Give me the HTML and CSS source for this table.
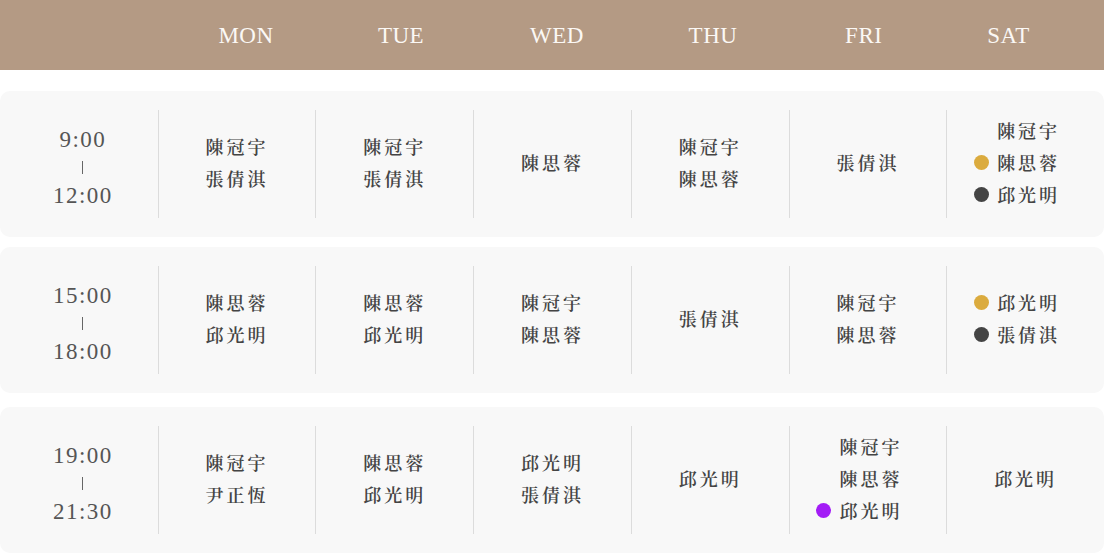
FILE: index.html
```html
<!DOCTYPE html>
<html lang="zh-Hant">
<head>
<meta charset="utf-8">
<title>Schedule</title>
<link rel="stylesheet" href="styles.css">
</head>
<body>
<div class="schedule">
  <div class="head">
    <div class="head-blank"></div>
    <div class="day">MON</div>
    <div class="day">TUE</div>
    <div class="day">WED</div>
    <div class="day">THU</div>
    <div class="day">FRI</div>
    <div class="day">SAT</div>
  </div>

  <div class="rows">
    <div class="row">
      <div class="cell time"><span>9:00</span><i class="dash"></i><span>12:00</span></div>
      <div class="cell"><ul class="names"><li>陳冠宇</li><li>張倩淇</li></ul></div>
      <div class="cell"><ul class="names"><li>陳冠宇</li><li>張倩淇</li></ul></div>
      <div class="cell"><ul class="names"><li>陳思蓉</li></ul></div>
      <div class="cell"><ul class="names"><li>陳冠宇</li><li>陳思蓉</li></ul></div>
      <div class="cell"><ul class="names"><li>張倩淇</li></ul></div>
      <div class="cell"><ul class="names has-dot"><li>陳冠宇</li><li class="dot gold">陳思蓉</li><li class="dot dark">邱光明</li></ul></div>
    </div>

    <div class="row">
      <div class="cell time"><span>15:00</span><i class="dash"></i><span>18:00</span></div>
      <div class="cell"><ul class="names"><li>陳思蓉</li><li>邱光明</li></ul></div>
      <div class="cell"><ul class="names"><li>陳思蓉</li><li>邱光明</li></ul></div>
      <div class="cell"><ul class="names"><li>陳冠宇</li><li>陳思蓉</li></ul></div>
      <div class="cell"><ul class="names"><li>張倩淇</li></ul></div>
      <div class="cell"><ul class="names"><li>陳冠宇</li><li>陳思蓉</li></ul></div>
      <div class="cell"><ul class="names has-dot"><li class="dot gold">邱光明</li><li class="dot dark">張倩淇</li></ul></div>
    </div>

    <div class="row row-last">
      <div class="cell time"><span>19:00</span><i class="dash"></i><span>21:30</span></div>
      <div class="cell"><ul class="names"><li>陳冠宇</li><li>尹正恆</li></ul></div>
      <div class="cell"><ul class="names"><li>陳思蓉</li><li>邱光明</li></ul></div>
      <div class="cell"><ul class="names"><li>邱光明</li><li>張倩淇</li></ul></div>
      <div class="cell"><ul class="names"><li>邱光明</li></ul></div>
      <div class="cell"><ul class="names has-dot"><li>陳冠宇</li><li>陳思蓉</li><li class="dot purple">邱光明</li></ul></div>
      <div class="cell"><ul class="names"><li>邱光明</li></ul></div>
    </div>
  </div>
</div>
</body>
</html>
```

FILE: styles.css
```css
* { box-sizing: border-box; }

html, body {
  margin: 0;
  padding: 0;
  background: #ffffff;
}

body {
  font-family: "Liberation Serif", "Noto Serif CJK TC", "Noto Serif TC", "Noto Sans CJK TC", serif;
  width: 1104px;
  height: 553px;
  overflow: hidden;
}

.head {
  height: 70px;
  background: #b49a84;
  display: grid;
  grid-template-columns: 168px 156px 154px 158px 154px 147.5px 142px;
  align-items: center;
}

.day {
  text-align: center;
  color: #fbf8f5;
  font-size: 23px;
  letter-spacing: 0.5px;
  font-weight: 400;
  line-height: 1;
  padding-top: 1px;
}

.rows {
  display: flex;
  flex-direction: column;
  padding-top: 21px;
}

.row {
  height: 146px;
  background: #f8f8f8;
  border-radius: 10px;
  display: grid;
  grid-template-columns: repeat(7, 1fr);
  padding: 19px 0;
}

.row + .row { margin-top: 10px; }
.row.row-last { margin-top: 14px; }

.cell {
  display: flex;
  align-items: center;
  justify-content: center;
  border-left: 1px solid #dcdcdc;
}

.cell.time {
  border-left: none;
  flex-direction: column;
  color: #555555;
  font-size: 23px;
  letter-spacing: 1.5px;
  line-height: 28px;
  padding-left: 8px;
  padding-top: 8px;
}

.dash {
  display: block;
  width: 1px;
  height: 13px;
  background: #666666;
  margin: 7px 0 8px;
}

.time span { display: block; height: 28px; line-height: 28px; }

.names {
  list-style: none;
  margin: -4px 0 0;
  padding: 0;
  font-family: "Noto Serif CJK TC", "Noto Serif TC", "Noto Sans CJK TC", serif;
  font-size: 18px;
  font-weight: 600;
  letter-spacing: 3px;
  line-height: 32px;
  color: #444444;
}

.names.has-dot { padding-left: 6px; }

.names li { position: relative; }

.names li.dot::before {
  content: "";
  position: absolute;
  left: -23px;
  top: 9px;
  width: 15px;
  height: 15px;
  border-radius: 50%;
}

.names li.gold::before { background: #dbab3e; }
.names li.dark::before { background: #444444; }
.names li.purple::before { background: #a31cf6; }
```
